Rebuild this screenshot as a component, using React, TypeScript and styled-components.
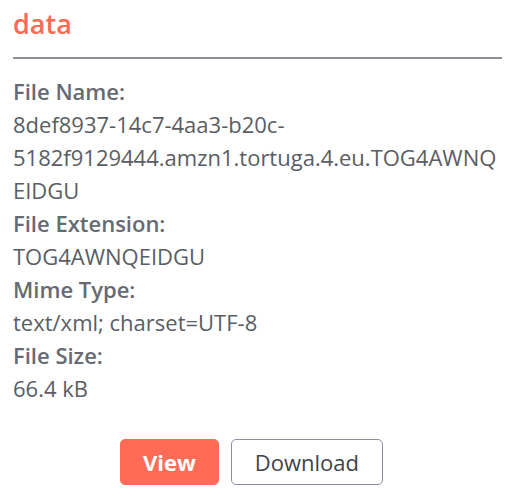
import * as React from 'react';
import styled, { createGlobalStyle } from 'styled-components';

const GlobalStyle = createGlobalStyle`
    body {
        margin: 0;
        background: #ffffff;
        font-family: "Open Sans", "Liberation Sans", sans-serif;
    }
`;

const Panel = styled.div`
    width: 489px;
    padding: 5px 15px 0 13px;
`;

const Title = styled.h2`
    margin: 0;
    font-size: 27px;
    font-weight: 600;
    line-height: 38px;
    color: #fd6954;
`;

const Divider = styled.hr`
    margin: 14px 0 16px;
    border: 0;
    border-top: 2px solid #8c8f96;
`;

const Details = styled.dl`
    margin: 0;
    font-size: 22px;
    line-height: 33px;
`;

const Label = styled.dt`
    font-weight: 600;
    color: #666a72;
`;

const Value = styled.dd`
    margin: 0;
    color: #5a5d64;
    overflow-wrap: anywhere;
`;

const Actions = styled.div`
    display: flex;
    justify-content: center;
    gap: 12px;
    margin-top: 34px;
    padding-right: 12px;
`;

const Button = styled.button<{ $primary?: boolean }>`
    height: 46px;
    padding: 0 ${p => (p.$primary ? 22 : 23)}px;
    border-radius: 5px;
    font-family: inherit;
    font-size: 22px;
    font-weight: ${p => (p.$primary ? 700 : 500)};
    cursor: pointer;
    color: ${p => (p.$primary ? '#ffffff' : '#40434a')};
    background: ${p => (p.$primary ? '#ff6b57' : '#ffffff')};
    border: 1px solid ${p => (p.$primary ? '#ff6b57' : '#8a919e')};
`;

const fields: [string, string][] = [
    ['File Name:', '8def8937-14c7-4aa3-b20c-5182f9129444.amzn1.tortuga.4.eu.TOG4AWNQEIDGU'],
    ['File Extension:', 'TOG4AWNQEIDGU'],
    ['Mime Type:', 'text/xml; charset=UTF-8'],
    ['File Size:', '66.4 kB'],
];

const App = () => (
    <>
        <GlobalStyle />
        <Panel>
            <Title>data</Title>
            <Divider />
            <Details>
                {fields.map(([label, value]) => (
                    <React.Fragment key={label}>
                        <Label>{label}</Label>
                        <Value>{value}</Value>
                    </React.Fragment>
                ))}
            </Details>
            <Actions>
                <Button $primary>View</Button>
                <Button>Download</Button>
            </Actions>
        </Panel>
    </>
);

export default App;
